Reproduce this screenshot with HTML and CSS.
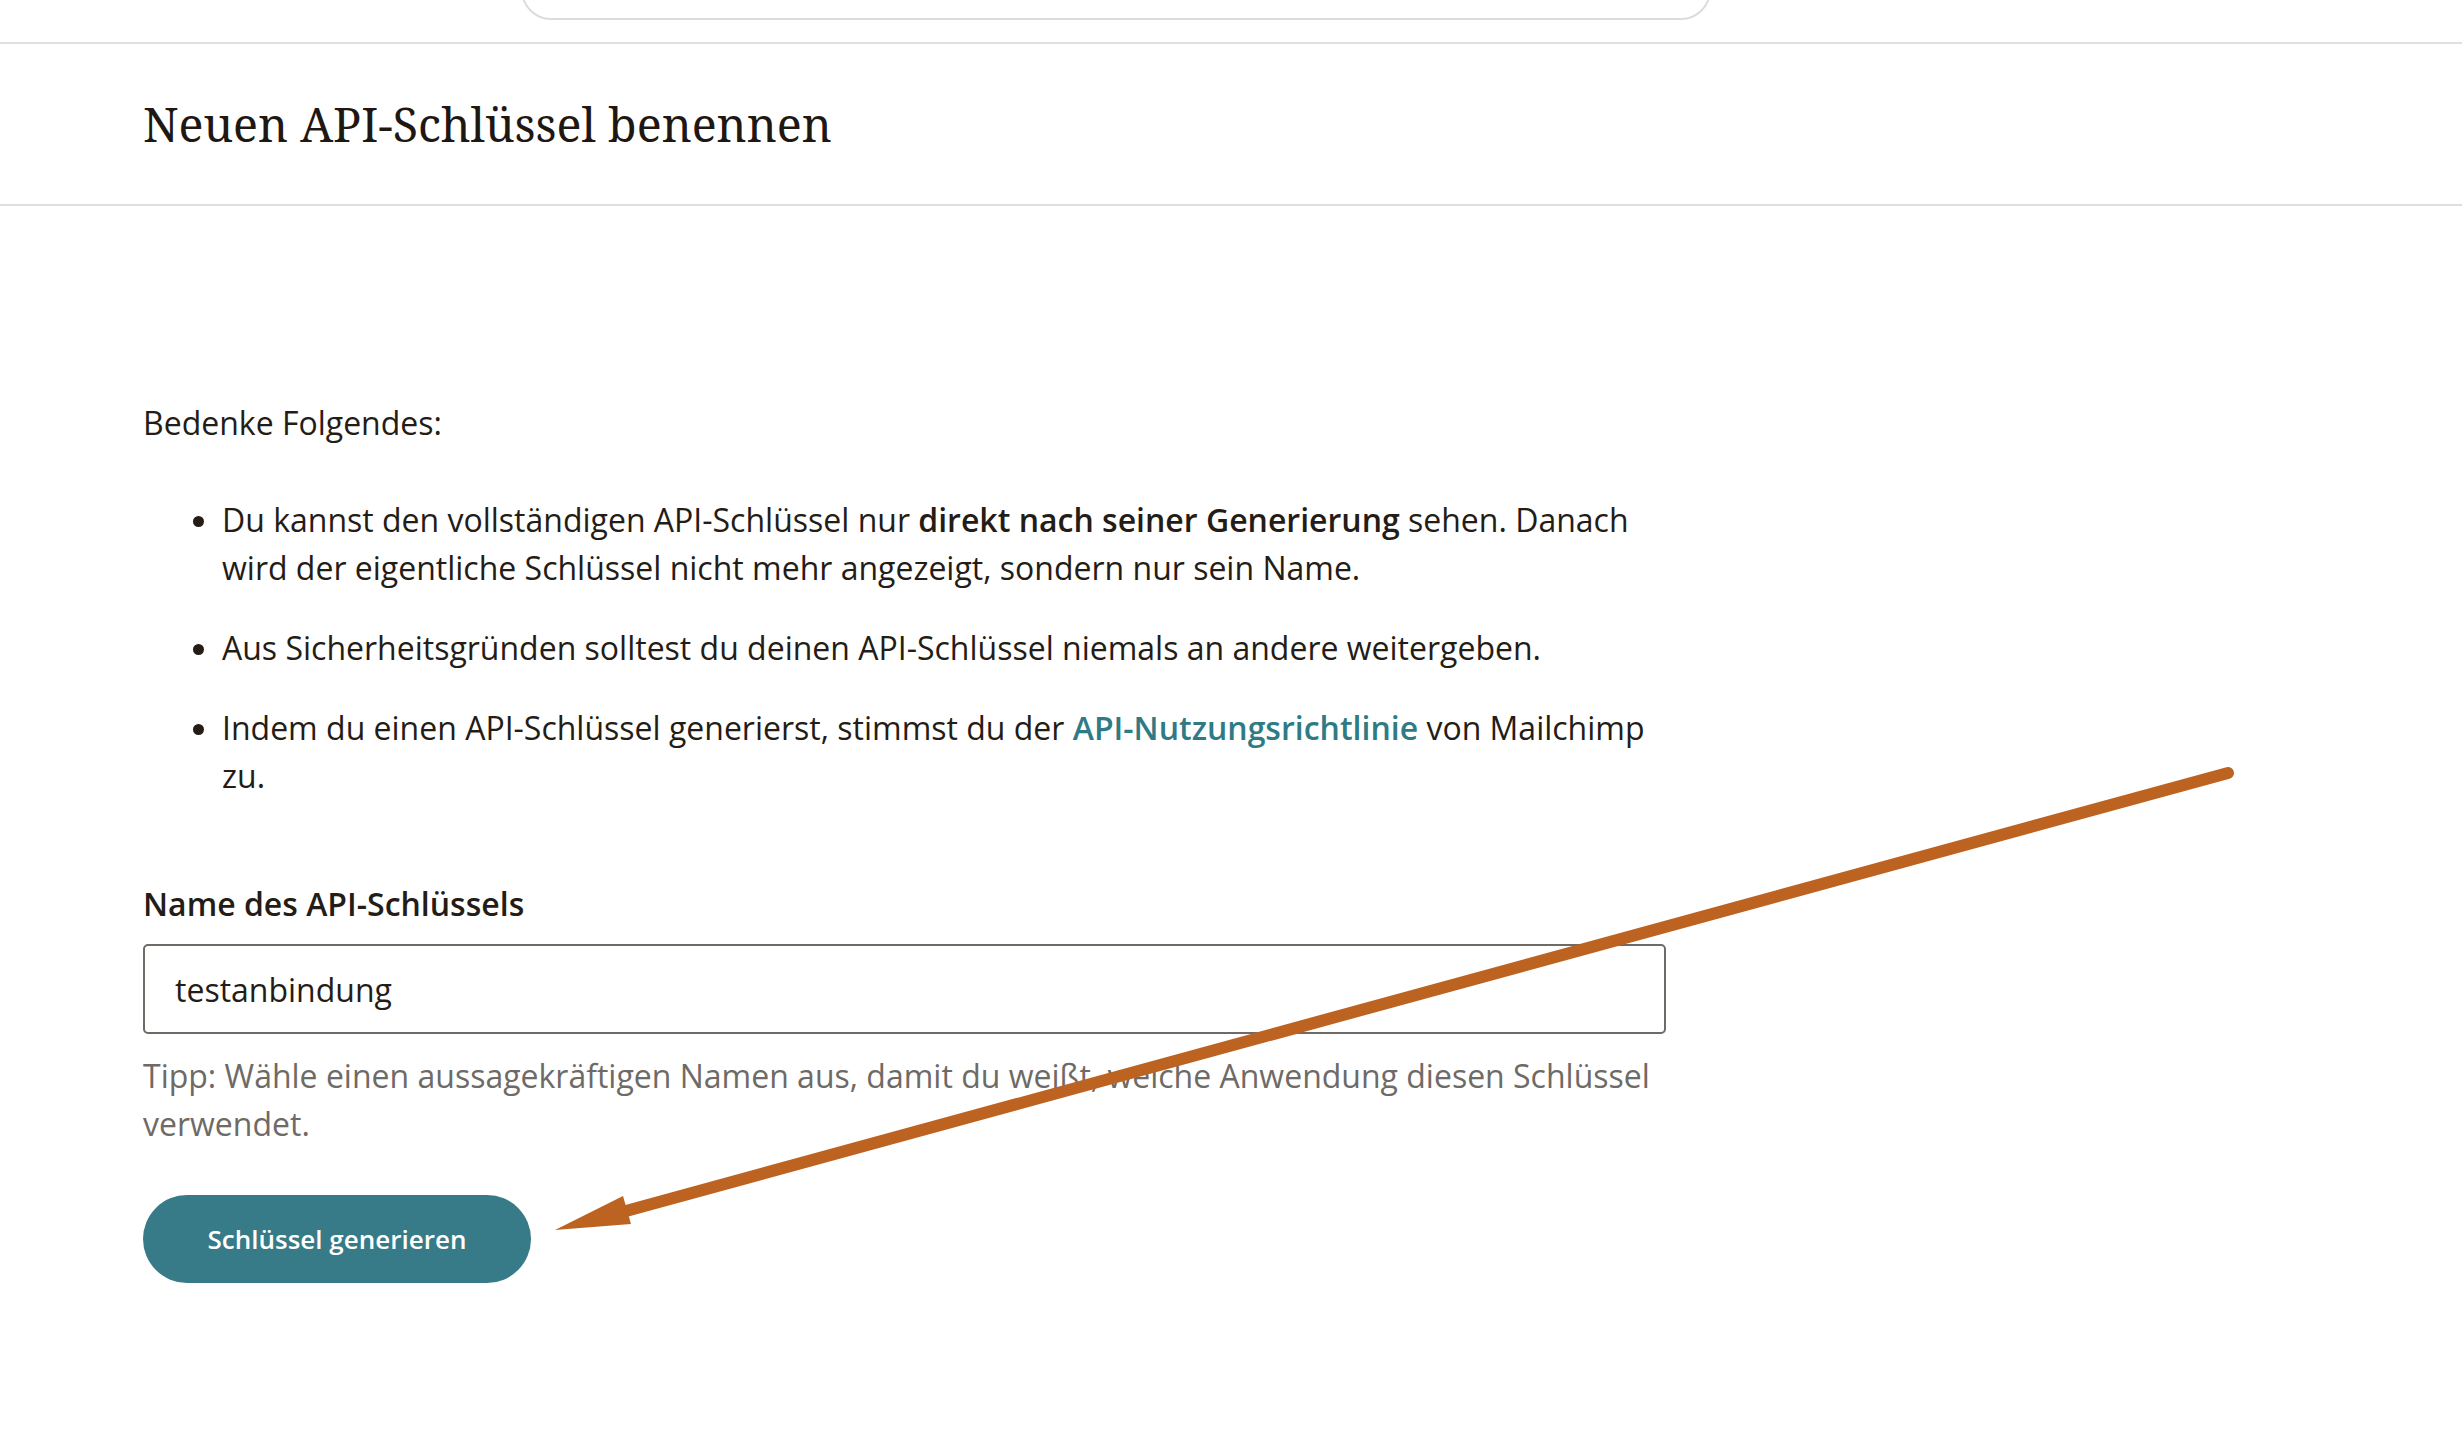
FILE: index.html
```html
<!DOCTYPE html>
<html lang="de">
<head>
<meta charset="utf-8">
<title>Neuen API-Schlüssel benennen</title>
<link rel="stylesheet" href="styles.css">
</head>
<body>
<div class="topbar"><div class="search"></div></div>
<header class="header"><h1 class="title">Neuen API-Schlüssel benennen</h1></header>
<main class="main">
  <p class="intro">Bedenke Folgendes:</p>
  <ul class="list">
    <li>Du kannst den vollständigen API-Schlüssel nur <strong>direkt nach seiner Generierung</strong> sehen. Danach wird der eigentliche Schlüssel nicht mehr angezeigt, sondern nur sein Name.</li>
    <li>Aus Sicherheitsgründen solltest du deinen API-Schlüssel niemals an andere weitergeben.</li>
    <li>Indem du einen API-Schlüssel generierst, stimmst du der <a class="link" href="#">API-Nutzungsrichtlinie</a> von Mailchimp zu.</li>
  </ul>
  <label class="label" for="keyname">Name des API-Schlüssels</label>
  <input class="input" id="keyname" type="text" value="testanbindung">
  <p class="hint">Tipp: Wähle einen aussagekräftigen Namen aus, damit du weißt, welche Anwendung diesen Schlüssel verwendet.</p>
  <button class="button" type="button">Schlüssel generieren</button>
</main>
<svg class="arrow" width="2462" height="1430" viewBox="0 0 2462 1430">
  <line x1="2228" y1="773" x2="626" y2="1211" stroke="#bd6322" stroke-width="12" stroke-linecap="round"/>
  <polygon points="555,1230 623,1196 631,1224" fill="#bd6322"/>
</svg>
</body>
</html>
```
FILE: styles.css
```css
html, body { margin: 0; padding: 0; background: #fff; }
body { font-family: "Open Sans", sans-serif; color: #241c15; width: 2462px; height: 1430px; overflow: hidden; position: relative; }
.topbar { height: 42px; border-bottom: 2px solid #e0e0e0; overflow: hidden; }
.search { width: 1190px; height: 60px; margin: -40px 0 0 521px; border: 2px solid #dcdcdc; border-radius: 38px; box-sizing: border-box; }
.header { height: 160px; border-bottom: 2px solid #dedede; display: flex; align-items: center; padding-left: 143px; }
.title { font-family: "Noto Serif", "DejaVu Serif", serif; font-weight: 400; font-size: 46.6px; margin: 0; color: #1f1812; }
.main { padding: 0 0 0 143px; width: 1523px; }
.intro { font-size: 32px; line-height: 48px; margin: 193px 0 0; }
.list { font-size: 32px; line-height: 48px; margin: 49px 0 0; padding-left: 79px; }
.list li { margin-bottom: 32px; }
.list li:last-child { margin-bottom: 0; }
.list strong { font-weight: 600; }
.link { color: #2f7b85; font-weight: 600; text-decoration: none; }
.label { display: block; font-size: 32px; line-height: 48px; font-weight: 600; margin-top: 80px; }
.input { display: block; width: 100%; box-sizing: border-box; height: 90px; margin-top: 16px; border: 2px solid #6e6a66; border-radius: 5px; padding: 0 30px; font: 32px "Open Sans", sans-serif; color: #241c15; background: #fff; outline: none; }
.hint { color: #6e6a66; font-size: 32px; line-height: 48px; margin: 18px 0 0; }
.button { display: block; margin-top: 47px; height: 88px; width: 388px; border: 0; border-radius: 44px; background: #367b87; color: #fff; font: 600 26px "Open Sans", sans-serif; padding: 0; }
.arrow { position: absolute; left: 0; top: 0; pointer-events: none; }
```
